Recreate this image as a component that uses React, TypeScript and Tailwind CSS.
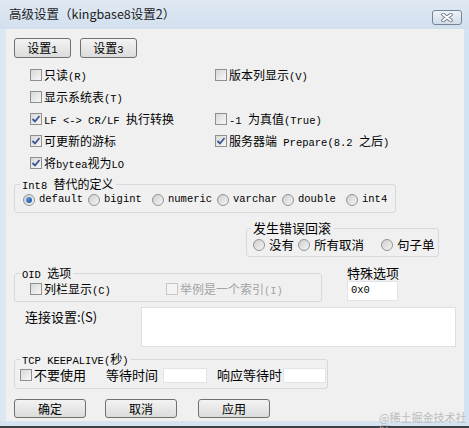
import React from "react";

const cjk = "font-['Noto_Sans_CJK_SC',sans-serif]";

// SimSun-style mixed text: ascii runs are narrow mono, the rest CJK
const Txt = ({ s, className = "" }: { s: string; className?: string }) => {
  const parts = s.split(/([\x20-\x7e]+)/).filter(Boolean);
  return (
    <span className={"inline-flex h-[16px] items-baseline whitespace-pre " + className}>
      {parts.map((p, i) =>
        /^[\x20-\x7e]+$/.test(p) ? (
          <span key={i} className="font-['Liberation_Mono',monospace] text-[10.5px] leading-[15px]">
            {p}
          </span>
        ) : (
          <span key={i} className="leading-[16px]">{p}</span>
        )
      )}
    </span>
  );
};

const Check = ({
  label,
  checked = false,
  disabled = false,
  big = false,
}: {
  label: string;
  checked?: boolean;
  disabled?: boolean;
  big?: boolean;
}) => (
  <div className="flex h-[16px] items-center gap-[2px]">
    <span
      className={
        "flex h-[12px] w-[12px] shrink-0 items-center justify-center border " +
        (disabled
          ? "border-[#c6c6c6] bg-[#f4f4f4]"
          : "border-[#8e8f8f] bg-gradient-to-br from-[#d8d8d8] to-[#f7f7f7]")
      }
    >
      {checked && (
        <svg width="10" height="10" viewBox="0 0 10 10">
          <path d="M1.5 5 L4 7.5 L8.5 2" fill="none" stroke="#3a5694" strokeWidth="1.8" />
        </svg>
      )}
    </span>
    {big ? (
      <span className={"text-[13px] leading-[16px] " + (disabled ? "text-[#a3a3a3]" : "text-black")}>
        {label}
      </span>
    ) : (
      <Txt s={label} className={"text-[12px] " + (disabled ? "text-[#a3a3a3]" : "text-black")} />
    )}
  </div>
);

const Radio = ({ label, on = false, big = false }: { label: string; on?: boolean; big?: boolean }) => (
  <div className="flex h-[16px] items-center gap-[4px]">
    <span className="flex h-[12px] w-[12px] shrink-0 items-center justify-center rounded-full border border-[#949494] bg-gradient-to-br from-[#cfcfcf] to-[#f5f5f5]">
      {on && <span className="h-[6px] w-[6px] rounded-full bg-gradient-to-br from-[#6aa6e6] to-[#1b4f94]" />}
    </span>
    {big ? (
      <span className="text-[12.5px] leading-[16px] text-black">{label}</span>
    ) : (
      <Txt s={label} className="text-[12px] text-black" />
    )}
  </div>
);

const Btn = ({ label, w }: { label: string; w: string }) => (
  <button
    className={
      w +
      " flex items-center justify-center rounded-[3px] border border-[#707070] bg-gradient-to-b from-[#f3f3f3] to-[#dcdcdc] text-[12px] leading-none text-black"
    }
  >
    <Txt s={label} />
  </button>
);

const Legend = ({ children, ml = "ml-[5px]" }: { children: React.ReactNode; ml?: string }) => (
  <legend className={ml + " flex h-[16px] items-center px-[2px] leading-[16px]"}>{children}</legend>
);

export default function App() {
  return (
    <div className={"relative flex h-[428px] w-[469px] flex-col overflow-hidden bg-[#d6e3f0] " + cjk}>
      {/* title bar */}
      <div className="flex h-[29px] shrink-0 items-center justify-between bg-gradient-to-b from-[#dfe9f4] to-[#d2dfed] pl-[9px] pr-[7px]">
        <span className="text-[12.5px] text-[#222]">高级设置（kingbase8设置2）</span>
        <div className="mt-[6px] flex h-[15px] w-[30px] items-center justify-center rounded-[3px] border border-[#74859a] bg-gradient-to-b from-[#eef3f8] to-[#d1dce8]">
          <svg width="14" height="9" viewBox="0 0 14 9">
            <path d="M3 1.5 L11 7.5 M11 1.5 L3 7.5" stroke="#6b7787" strokeWidth="3.6" strokeLinecap="round" />
            <path d="M3 1.5 L11 7.5 M11 1.5 L3 7.5" stroke="#ffffff" strokeWidth="2" strokeLinecap="round" />
          </svg>
        </div>
      </div>

      <div className="flex shrink-0">
        <div className="w-[6px] bg-[#dbe7f3]" />
        {/* client area */}
        <div className="flex h-[392px] w-[458px] flex-col overflow-hidden bg-[#f0f0f0] text-black">
          <div className="ml-[8px] mt-[9px] flex gap-[9px]">
            <Btn label="设置1" w="w-[57px] h-[20px]" />
            <Btn label="设置3" w="w-[57px] h-[20px]" />
          </div>

          <div className="ml-[24px] mt-[6px] grid grid-cols-[185px_auto] auto-rows-[22px] items-center">
            <Check label="只读(R)" />
            <Check label="版本列显示(V)" />
            <Check label="显示系统表(T)" />
            <div />
            <Check label="LF <-> CR/LF 执行转换" checked />
            <Check label="-1 为真值(True)" />
            <Check label="可更新的游标" checked />
            <Check label="服务器端 Prepare(8.2 之后)" checked />
            <Check label="将bytea视为LO" checked />
            <div />
          </div>

          <fieldset className="ml-[8px] mt-[2px] w-[382px] rounded-[3px] border border-[#d5d9dd] pb-[5px] text-[12px]">
            <Legend>
              <Txt s="Int8 替代的定义" />
            </Legend>
            <div className="flex h-[15px] items-center pl-[8px]">
              <div className="w-[65px]"><Radio label="default" on /></div>
              <div className="w-[64px]"><Radio label="bigint" /></div>
              <div className="w-[65px]"><Radio label="numeric" /></div>
              <div className="w-[65px]"><Radio label="varchar" /></div>
              <div className="w-[64px]"><Radio label="double" /></div>
              <div><Radio label="int4" /></div>
            </div>
          </fieldset>

          <fieldset className="ml-[240px] mt-[7px] w-[193px] rounded-[3px] border border-[#d5d9dd] pb-[2px] text-[13px]">
            <Legend ml="ml-[4px]">发生错误回滚</Legend>
            <div className="flex h-[18px] items-center pl-[6px]">
              <div className="w-[45px]"><Radio label="没有" big /></div>
              <div className="w-[83px]"><Radio label="所有取消" big /></div>
              <div><Radio label="句子单" big /></div>
            </div>
          </fieldset>

          <div className="mt-[8px] flex">
            <fieldset className="ml-[8px] w-[308px] rounded-[3px] border border-[#d5d9dd] pb-[4px] text-[12px]">
              <Legend>
                <Txt s="OID 选项" />
              </Legend>
              <div className="flex h-[16px] items-center pl-[15px]">
                <div className="w-[136px]"><Check label="列栏显示(C)" /></div>
                <Check label="举例是一个索引(I)" disabled />
              </div>
            </fieldset>
            <div className="ml-[25px] flex flex-col">
              <span className="h-[16px] text-[13px] leading-[16px]">特殊选项</span>
              <div className="flex h-[20px] w-[51px] items-center border border-[#e1e4e8] bg-white pl-[3px]">
                <Txt s="0x0" className="text-[12px]" />
              </div>
            </div>
          </div>

          <div className="mt-[5px] flex h-[40px] items-start">
            <span className="ml-[19px] w-[116px] pt-[2px] text-[13px] leading-[16px]">连接设置:(S)</span>
            <div className="h-[40px] w-[315px] border border-[#dcdfe3] bg-white" />
          </div>

          <fieldset className="ml-[8px] mt-[4px] w-[314px] rounded-[3px] border border-[#d5d9dd] pb-[5px] text-[12px]">
            <Legend>
              <Txt s="TCP KEEPALIVE(秒)" />
            </Legend>
            <div className="flex h-[16px] items-center pl-[5px]">
              <div className="w-[86px]"><Check label="不要使用" big /></div>
              <span className="w-[57px] text-[13px] leading-[16px]">等待时间</span>
              <div className="h-[15px] w-[44px] border border-[#e1e4e8] bg-white" />
              <span className="ml-[10px] w-[66px] text-[13px] leading-[16px]">响应等待时</span>
              <div className="h-[15px] w-[43px] border border-[#e1e4e8] bg-white" />
            </div>
          </fieldset>

          <div className="ml-[8px] mt-[10px] flex">
            <Btn label="确定" w="w-[72px] h-[19px]" />
            <div className="ml-[19px]"><Btn label="取消" w="w-[72px] h-[19px]" /></div>
            <div className="ml-[21px]"><Btn label="应用" w="w-[72px] h-[19px]" /></div>
          </div>
        </div>
        <div className="w-[5px] bg-[#d3e3f3]" />
      </div>

      <div className="h-[5px] shrink-0 bg-[#d6e3f0]" />
      <div className="h-[2px] shrink-0 bg-[#3b3f44]" />

      <span className="absolute left-[379px] top-[411px] text-[11px] leading-[12px] text-[#bdbdbd]">
        @稀土掘金技术社区
      </span>
    </div>
  );
}
